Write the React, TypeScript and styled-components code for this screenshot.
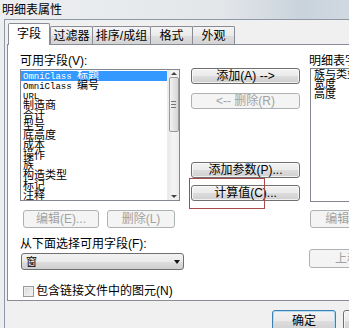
import React from 'react';
import styled, { createGlobalStyle, css } from 'styled-components';

const uiFont = `"Liberation Sans", "Noto Sans CJK SC", sans-serif`;
const monoFont = `"Liberation Mono", "Noto Sans CJK SC", monospace`;

const GlobalStyle = createGlobalStyle`
  html, body {
    margin: 0;
    padding: 0;
    overflow: hidden;
    background: #f0f0f0;
  }
  body {
    width: 349px;
    height: 328px;
    font-family: ${uiFont};
    font-size: 12px;
    color: #000;
  }
  * { box-sizing: border-box; }
`;

// The dialog is wider than the shot, its right side is cut off
const Window = styled.div`
  width: 486px;
  height: 340px;
  display: flex;
  flex-direction: column;
  background: linear-gradient(
    90deg,
    #eceef0 0%,
    #e4e7ea 45%,
    #c9d3dc 62%,
    #d6dee6 80%,
    #e3e8ed 100%
  );
`;

const TitleBar = styled.div`
  height: 19px;
  padding-left: 2px;
  display: flex;
  align-items: center;
  line-height: 14px;
  font-size: 12px;
`;

const Client = styled.div`
  flex: 1;
  margin-left: 4px;
  border-left: 1px solid #8d99a6;
  border-top: 1px solid #8d99a6;
  background: #f0f0f0;
  padding: 3px 0 0 1px;
  display: flex;
  flex-direction: column;
`;

const TabStrip = styled.div`
  display: flex;
  align-items: flex-end;
  padding-left: 2px;
  height: 21px;
  position: relative;
  z-index: 1;
`;

const Tab = styled.div<{ $w: number; $active?: boolean }>`
  width: ${(p) => p.$w}px;
  height: 18px;
  margin-left: -1px;
  border: 1px solid #898c95;
  border-bottom: none;
  border-radius: 2px 2px 0 0;
  display: flex;
  align-items: center;
  justify-content: center;
  line-height: 14px;
  background: linear-gradient(#f4f4f4 0%, #eaeaea 50%, #dedede 51%, #d4d4d4 100%);
  ${(p) =>
    p.$active &&
    css`
      height: 22px;
      margin-left: 0;
      margin-right: 1px;
      margin-bottom: -1px;
      background: #fff;
      padding-bottom: 1px;
    `}
`;

const Pane = styled.div`
  margin-left: 1px;
  width: 474px;
  height: 257px;
  border: 1px solid #898c95;
  background: #fff;
  display: flex;
  padding: 9px 0 0 12px;
`;

const Column = styled.div<{ $w: number; $gap?: number }>`
  width: ${(p) => p.$w}px;
  margin-left: ${(p) => p.$gap ?? 0}px;
  display: flex;
  flex-direction: column;
`;

const Label = styled.div<{ $mt?: number }>`
  height: 14px;
  line-height: 14px;
  white-space: nowrap;
  margin-top: ${(p) => p.$mt ?? 0}px;
`;

const ListBox = styled.div<{ $w: number; $h: number; $mt?: number; $ml?: number }>`
  width: ${(p) => p.$w}px;
  height: ${(p) => p.$h}px;
  margin-top: ${(p) => p.$mt ?? 0}px;
  margin-left: ${(p) => p.$ml ?? 0}px;
  border: 1px solid #828790;
  background: #fff;
  display: flex;
  overflow: hidden;
`;

const Items = styled.div`
  flex: 1;
  padding-top: 1px;
  overflow: hidden;
`;

const Item = styled.div<{ $selected?: boolean; $pl?: number }>`
  height: 10px;
  line-height: 10px;
  font-family: ${monoFont};
  font-size: 11px;
  white-space: nowrap;
  padding-left: ${(p) => p.$pl ?? 2}px;
  color: #000;
  ${(p) =>
    p.$selected &&
    css`
      background: #3399ff;
      color: #fff;
    `}
`;

const Latin = styled.span`
  font-size: 9px;
  font-family: "Liberation Mono", monospace;
`;

const ScrollBar = styled.div`
  width: 12px;
  display: flex;
  flex-direction: column;
  align-items: center;
  background: linear-gradient(90deg, #e9e9e9, #f5f5f5 50%, #ececec);
  border-left: 1px solid #ececec;
`;

const Arrow = styled.div<{ $down?: boolean }>`
  height: 7px;
  display: flex;
  align-items: center;
  justify-content: center;
  &::after {
    content: '';
    border-left: 3px solid transparent;
    border-right: 3px solid transparent;
    ${(p) =>
      p.$down
        ? css`border-top: 3px solid #444;`
        : css`border-bottom: 3px solid #444;`}
  }
`;

const Thumb = styled.div`
  width: 10px;
  height: 55px;
  border: 1px solid #999;
  border-radius: 2px;
  background: linear-gradient(90deg, #f2f2f2, #e4e4e4 50%, #d6d6d6);
  display: flex;
  flex-direction: column;
  align-items: center;
  justify-content: center;
  gap: 2px;
`;

const Grip = styled.div`
  width: 5px;
  height: 1px;
  background: #777;
`;

const Track = styled.div`
  flex: 1;
`;

const Button = styled.div<{ $w: number; $h?: number; $mt?: number; $off?: boolean; $default?: boolean }>`
  width: ${(p) => p.$w}px;
  height: ${(p) => p.$h ?? 16}px;
  margin-top: ${(p) => p.$mt ?? 0}px;
  border: 1px solid #707070;
  border-radius: 3px;
  background: linear-gradient(#f2f2f2 0%, #ebebeb 50%, #dddddd 51%, #cfcfcf 100%);
  box-shadow: inset 0 0 0 1px rgba(255, 255, 255, 0.7);
  display: flex;
  align-items: center;
  justify-content: center;
  line-height: 12px;
  white-space: nowrap;
  flex-shrink: 0;
  position: relative;
  ${(p) =>
    p.$off &&
    css`
      border-color: #adb2b5;
      background: #f4f4f4;
      box-shadow: none;
      color: #a2a2a2;
    `}
  ${(p) =>
    p.$default &&
    css`
      border-color: #3c7fb1;
      box-shadow: inset 0 0 0 1px #b4dcf3;
    `}
`;

const ButtonRow = styled.div<{ $mt?: number; $pl?: number }>`
  display: flex;
  gap: 8px;
  margin-top: ${(p) => p.$mt ?? 0}px;
  padding-left: ${(p) => p.$pl ?? 0}px;
`;

// hand-drawn marker round a button, laid over the dialog
const Marker = styled.div`
  position: absolute;
  left: -3px;
  top: -8px;
  width: 76px;
  height: 31px;
  border: 1px solid #a84a4a;
  pointer-events: none;
`;

const Combo = styled.div`
  width: 163px;
  height: 17px;
  margin-top: 2px;
  margin-left: 1px;
  border: 1px solid #707070;
  border-radius: 3px;
  background: linear-gradient(#f2f2f2 0%, #ebebeb 50%, #dddddd 51%, #cfcfcf 100%);
  display: flex;
  align-items: center;
  justify-content: space-between;
  padding: 0 3px 0 4px;
  font-size: 11px;
  line-height: 12px;
  &::after {
    content: '';
    border-left: 3px solid transparent;
    border-right: 3px solid transparent;
    border-top: 4px solid #111;
  }
`;

const CheckRow = styled.div`
  display: flex;
  align-items: center;
  gap: 2px;
  margin-top: 15px;
  padding-left: 3px;
  height: 13px;
  line-height: 13px;
`;

const CheckBox = styled.div`
  width: 11px;
  height: 11px;
  border: 1px solid #9a9a9a;
  background: linear-gradient(135deg, #d8d8d8, #f4f4f4);
  box-shadow: inset 0 0 0 1px #eee;
`;

const Footer = styled.div`
  display: flex;
  justify-content: flex-end;
  gap: 7px;
  padding: 9px 8px 0 0;
`;

const runs = (text: string) =>
  text
    .split(/([\x20-\x7e]+)/)
    .filter(Boolean)
    .map((part, i) =>
      /^[\x20-\x7e]+$/.test(part) ? <Latin key={i}>{part}</Latin> : <span key={i}>{part}</span>
    );

const available = [
  'OmniClass 标题',
  'OmniClass 编号',
  'URL',
  '制造商',
  '合计',
  '型号',
  '底高度',
  '成本',
  '操作',
  '族',
  '构造类型',
  '标记',
  '注释',
];

const scheduled = ['族与类型', '宽度', '高度'];

const tabs = [
  { name: '字段', w: 42 },
  { name: '过滤器', w: 43 },
  { name: '排序/成组', w: 59 },
  { name: '格式', w: 43 },
  { name: '外观', w: 43 },
];

export default function App() {
  return (
    <>
      <GlobalStyle />
      <Window>
        <TitleBar>明细表属性</TitleBar>
        <Client>
          <TabStrip>
            {tabs.map((t, i) => (
              <Tab key={t.name} $w={t.w} $active={i === 0}>
                {t.name}
              </Tab>
            ))}
          </TabStrip>
          <Pane>
            <Column $w={164}>
              <Label>可用字段(V):</Label>
              <ListBox $w={160} $h={132} $mt={1}>
                <Items>
                  {available.map((f, i) => (
                    <Item key={f} $selected={i === 0}>
                      {runs(f)}
                    </Item>
                  ))}
                </Items>
                <ScrollBar>
                  <Arrow />
                  <Thumb>
                    <Grip />
                    <Grip />
                    <Grip />
                  </Thumb>
                  <Track />
                  <Arrow $down />
                </ScrollBar>
              </ListBox>
              <ButtonRow $mt={9} $pl={3}>
                <Button $w={76} $h={18} $off>
                  编辑(E)...
                </Button>
                <Button $w={68} $h={18} $off>
                  删除(L)
                </Button>
              </ButtonRow>
              <Label $mt={9}>从下面选择可用字段(F):</Label>
              <Combo>窗</Combo>
              <CheckRow>
                <CheckBox />
                包含链接文件中的图元(N)
              </CheckRow>
            </Column>
            <Column $w={109} $gap={7}>
              <Button $w={109} $mt={14}>
                添加(A) --&gt;
              </Button>
              <Button $w={109} $mt={9} $off>
                &lt;-- 删除(R)
              </Button>
              <Button $w={109} $mt={53}>
                添加参数(P)...
              </Button>
              <Button $w={109} $mt={7}>
                计算值(C)...
                <Marker />
              </Button>
            </Column>
            <Column $w={165} $gap={9}>
              <Label>明细表字段(S):</Label>
              <ListBox $w={165} $h={134} $ml={1}>
                <Items>
                  {scheduled.map((f) => (
                    <Item key={f} $pl={3}>
                      {f}
                    </Item>
                  ))}
                </Items>
              </ListBox>
              <ButtonRow $mt={8} $pl={1}>
                <Button $w={76} $h={18} $off>
                  编辑(I)...
                </Button>
              </ButtonRow>
              <Button $w={76} $h={19} $mt={21} $off>
                上移
              </Button>
            </Column>
          </Pane>
          <Footer>
            <Button $w={64} $h={22} $default>
              确定
            </Button>
            <Button $w={64} $h={22}>
              取消
            </Button>
            <Button $w={64} $h={22}>
              帮助
            </Button>
          </Footer>
        </Client>
      </Window>
    </>
  );
}
